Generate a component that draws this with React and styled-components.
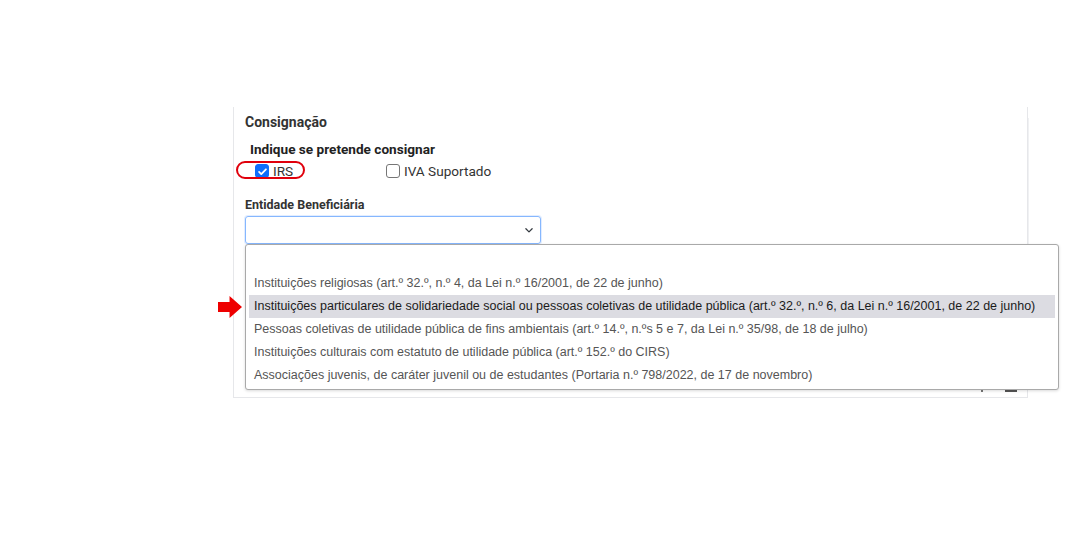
import React from "react";
import styled, { createGlobalStyle } from "styled-components";

const GlobalStyle = createGlobalStyle`
  html, body {
    margin: 0;
    padding: 0;
    background: #ffffff;
  }
  body {
    font-family: Roboto, "Liberation Sans", Arial, sans-serif;
    color: #212529;
  }
`;

const options = [
  "",
  "Instituições religiosas (art.º 32.º, n.º 4, da Lei n.º 16/2001, de 22 de junho)",
  "Instituições particulares de solidariedade social ou pessoas coletivas de utilidade pública (art.º 32.º, n.º 6, da Lei n.º 16/2001, de 22 de junho)",
  "Pessoas coletivas de utilidade pública de fins ambientais (art.º 14.º, n.ºs 5 e 7, da Lei n.º 35/98, de 18 de julho)",
  "Instituições culturais com estatuto de utilidade pública (art.º 152.º do CIRS)",
  "Associações juvenis, de caráter juvenil ou de estudantes (Portaria n.º 798/2022, de 17 de novembro)",
];

export default function App() {
  return (
    <>
      <GlobalStyle />
      <Page>
        <Card>
          <Title>Consignação</Title>
          <Question>Indique se pretende consignar</Question>
          <CheckRow>
            <CheckItem>
              <Highlight />
              <Box $checked>
                <svg width="11" height="11" viewBox="0 0 16 16">
                  <path d="M3 8.5l3.2 3.2L13 4.8" fill="none" stroke="#fff" strokeWidth="2.6" strokeLinecap="round" strokeLinejoin="round" />
                </svg>
              </Box>
              <span>IRS</span>
            </CheckItem>
            <CheckItem>
              <Box />
              <span>IVA Suportado</span>
            </CheckItem>
          </CheckRow>
          <FieldLabel>Entidade Beneficiária</FieldLabel>
          <SelectWrap>
            <Select>
              <svg width="10" height="10" viewBox="0 0 16 16">
                <path d="M3 6l5 5 5-5" fill="none" stroke="#343a40" strokeWidth="2" strokeLinecap="round" strokeLinejoin="round" />
              </svg>
            </Select>
            <Menu>
              {options.map((o, i) => (
                <Option key={i} $active={i === 2}>
                  {i === 2 && <Arrow />}
                  {o}
                </Option>
              ))}
            </Menu>
          </SelectWrap>
          <Footer>
            <Tick />
            <Dash />
          </Footer>
        </Card>
      </Page>
    </>
  );
}

const Page = styled.div`
  width: 1088px;
  height: 549px;
  padding: 107px 0 0 233px;
  box-sizing: border-box;
  overflow: hidden;
`;

const Card = styled.section`
  width: 795px;
  height: 291px;
  box-sizing: border-box;
  border-left: 1px solid #e6e7ea;
  border-right: 1px solid #e6e7ea;
  border-bottom: 1px solid #e6e7ea;
  box-shadow: 12px 0 0 -11px #f0f1f3;
  padding: 6px 0 0 11px;
  display: flex;
  flex-direction: column;
`;

const Title = styled.h3`
  margin: 0;
  font-size: 14px;
  font-weight: 700;
  line-height: 18px;
  color: #333;
`;

const Question = styled.div`
  margin: 9px 0 0 5px;
  font-size: 13.6px;
  font-weight: 700;
  line-height: 18px;
  color: #222;
`;

const CheckRow = styled.div`
  display: grid;
  grid-template-columns: 131px auto;
  justify-content: start;
  margin: 5px 0 0 10px;
`;

const CheckItem = styled.label`
  position: relative;
  display: flex;
  align-items: center;
  gap: 4px;
  font-size: 13.6px;
  line-height: 16px;
  color: #333;
`;

const Highlight = styled.span`
  position: absolute;
  left: -19px;
  top: -2px;
  width: 65px;
  height: 14px;
  border: 2px solid #e0000c;
  border-radius: 9px;
`;

const Box = styled.span`
  width: 14px;
  height: 14px;
  box-sizing: border-box;
  border-radius: 3px;
  display: inline-flex;
  align-items: center;
  justify-content: center;
  background: ${(p) => (p.$checked ? "#0d6efd" : "#fff")};
  border: 1px solid ${(p) => (p.$checked ? "#0d6efd" : "#767676")};
`;

const FieldLabel = styled.div`
  margin-top: 18px;
  font-size: 12.5px;
  font-weight: 700;
  line-height: 16px;
  color: #333;
`;

const SelectWrap = styled.div`
  position: relative;
  margin-top: 3px;
  width: 296px;
`;

const Select = styled.div`
  height: 28px;
  box-sizing: border-box;
  border: 1px solid #86b7fe;
  border-radius: 3px;
  box-shadow: 0 0 0 1px rgba(13, 110, 253, 0.12);
  display: flex;
  align-items: center;
  justify-content: flex-end;
  padding-right: 6px;
`;

const Menu = styled.ul`
  position: absolute;
  top: 28px;
  left: 0;
  width: 814px;
  box-sizing: border-box;
  margin: 0;
  padding: 4px 3px 2px 3px;
  list-style: none;
  background: #fff;
  border: 1px solid #a9a9a9;
  border-radius: 3px;
  box-shadow: 0 1px 3px rgba(0, 0, 0, 0.15);
  z-index: 2;
`;

const Option = styled.li`
  position: relative;
  height: 23px;
  line-height: 23px;
  padding-left: 5px;
  font-family: "Liberation Sans", Arial, sans-serif;
  font-size: 12.5px;
  white-space: nowrap;
  color: ${(p) => (p.$active ? "#1b1b1b" : "#555")};
  background: ${(p) => (p.$active ? "#dcdce2" : "transparent")};
`;

const Arrow = styled.span`
  position: absolute;
  left: -31px;
  top: 1px;
  width: 24px;
  height: 22px;
  background: #ee0000;
  clip-path: polygon(0 27%, 48% 27%, 48% 0, 100% 50%, 48% 100%, 48% 73%, 0 73%);
`;

const Footer = styled.div`
  margin-top: auto;
  display: flex;
  justify-content: flex-end;
  align-items: flex-end;
  gap: 22px;
  padding: 0 10px 5px 0;
`;

const Tick = styled.span`
  width: 2px;
  height: 3px;
  background: #777;
`;

const Dash = styled.span`
  width: 12px;
  height: 2px;
  background: #555;
`;
